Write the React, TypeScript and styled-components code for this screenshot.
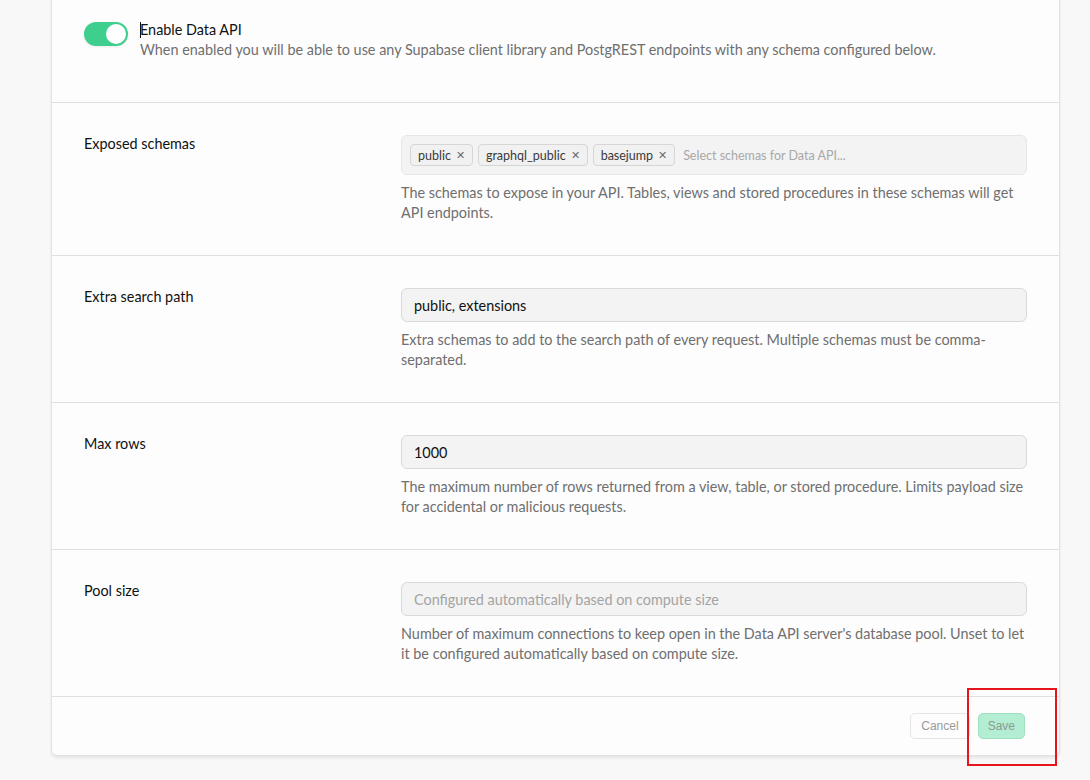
import React from 'react';
import styled, { createGlobalStyle } from 'styled-components';

const GlobalStyle = createGlobalStyle`
  html, body {
    margin: 0;
    padding: 0;
    background: #f8f8f8;
    font-family: Lato, "Liberation Sans", sans-serif;
    color: #1c1c1c;
  }
`;

const Page = styled.div`
  position: relative;
  width: 1090px;
  height: 780px;
  overflow: hidden;
`;

const Card = styled.div`
  margin: -11px 0 0 51px;
  width: 1007px;
  background: #fdfdfd;
  border: 1px solid #e2e2e2;
  border-radius: 0 0 6px 6px;
  box-shadow: 0 2px 3px rgba(0, 0, 0, 0.08);
`;

const ToggleSection = styled.div`
  display: flex;
  align-items: flex-start;
  gap: 12px;
  padding: 32px 32px 42px;
  border-bottom: 1px solid #e0e0e0;
`;

const Toggle = styled.div<{ $on?: boolean }>`
  flex: none;
  width: 44px;
  height: 24px;
  border-radius: 12px;
  background: ${(p) => (p.$on ? '#3ecf8e' : '#d6d6d6')};
  position: relative;
  box-shadow: 0 1px 3px rgba(0, 0, 0, 0.08);

  &::after {
    content: '';
    position: absolute;
    top: 2px;
    left: ${(p) => (p.$on ? '22px' : '2px')};
    width: 20px;
    height: 20px;
    border-radius: 50%;
    background: #fff;
  }
`;

const ToggleText = styled.div`
  display: flex;
  flex-direction: column;
  margin-top: -2px;
`;

const Title = styled.div`
  font-size: 14.4px;
  line-height: 20px;
  color: #111;
  position: relative;

  &::before {
    content: '';
    position: absolute;
    left: 0;
    top: 2px;
    height: 16px;
    border-left: 1px solid #111;
  }
`;

const Description = styled.div`
  font-size: 14.4px;
  line-height: 20px;
  color: #6f6f6f;
`;

const Row = styled.div`
  display: grid;
  grid-template-columns: 317px 1fr;
  padding: 32px;
  border-bottom: 1px solid #e0e0e0;
`;

const Label = styled.div`
  font-size: 14.4px;
  line-height: 20px;
  color: #111;
  margin-top: -1px;
`;

const Field = styled.div`
  display: flex;
  flex-direction: column;
  gap: 8px;
`;

const Input = styled.div<{ $placeholder?: boolean }>`
  height: 34px;
  box-sizing: border-box;
  border: 1px solid #dadada;
  border-radius: 6px;
  background: #f3f3f3;
  padding: 0 12px;
  display: flex;
  align-items: center;
  font-size: 14.4px;
  color: ${(p) => (p.$placeholder ? '#a3a3a3' : '#111')};
`;

const MultiSelect = styled.div`
  height: 40px;
  box-sizing: border-box;
  border: 1px solid #e6e6e6;
  border-radius: 6px;
  background: #f3f3f3;
  padding: 0 8px;
  display: flex;
  align-items: center;
  gap: 5px;
`;

const Tag = styled.span`
  display: inline-flex;
  align-items: center;
  gap: 5px;
  height: 22px;
  box-sizing: border-box;
  padding: 0 7px;
  border: 1px solid #d6d6d6;
  border-radius: 4px;
  background: #f1f1f1;
  font-size: 12.5px;
  color: #3a3a3a;
`;

const TagClose = styled.span`
  font-size: 11px;
  color: #6a6a6a;
`;

const SelectPlaceholder = styled.span`
  margin-left: 3px;
  font-size: 12.5px;
  color: #a8a8a8;
`;

const Footer = styled.div`
  display: flex;
  justify-content: flex-end;
  gap: 8px;
  padding: 16px 34px 16px 32px;
`;

const Button = styled.button<{ $primary?: boolean }>`
  height: 26px;
  padding: 0 ${(p) => (p.$primary ? '9px' : '10px')};
  border-radius: 5px;
  font-family: "Liberation Sans", Arial, sans-serif;
  font-size: 12px;
  border: 1px solid ${(p) => (p.$primary ? '#9fe0c0' : '#e6e6e6')};
  background: ${(p) => (p.$primary ? '#b4eed2' : '#fdfdfd')};
  color: ${(p) => (p.$primary ? '#8a9a92' : '#9a9a9a')};
`;

const Highlight = styled.div`
  position: absolute;
  left: 967px;
  top: 688px;
  width: 90px;
  height: 78px;
  border: 2px solid #e8141c;
  box-sizing: border-box;
  pointer-events: none;
`;

const rows = [
  {
    label: 'Extra search path',
    value: 'public, extensions',
    help: 'Extra schemas to add to the search path of every request. Multiple schemas must be comma-separated.',
  },
  {
    label: 'Max rows',
    value: '1000',
    help: 'The maximum number of rows returned from a view, table, or stored procedure. Limits payload size for accidental or malicious requests.',
  },
  {
    label: 'Pool size',
    value: 'Configured automatically based on compute size',
    placeholder: true,
    help: "Number of maximum connections to keep open in the Data API server's database pool. Unset to let it be configured automatically based on compute size.",
  },
];

export default function App() {
  return (
    <Page>
      <GlobalStyle />
      <Card>
        <ToggleSection>
          <Toggle $on />
          <ToggleText>
            <Title>Enable Data API</Title>
            <Description>
              When enabled you will be able to use any Supabase client library and PostgREST
              endpoints with any schema configured below.
            </Description>
          </ToggleText>
        </ToggleSection>

        <Row>
          <Label>Exposed schemas</Label>
          <Field>
            <MultiSelect>
              {['public', 'graphql_public', 'basejump'].map((s) => (
                <Tag key={s}>
                  {s}
                  <TagClose>✕</TagClose>
                </Tag>
              ))}
              <SelectPlaceholder>Select schemas for Data API...</SelectPlaceholder>
            </MultiSelect>
            <Description>
              The schemas to expose in your API. Tables, views and stored procedures in these
              schemas will get API endpoints.
            </Description>
          </Field>
        </Row>

        {rows.map((r) => (
          <Row key={r.label}>
            <Label>{r.label}</Label>
            <Field>
              <Input $placeholder={r.placeholder}>{r.value}</Input>
              <Description>{r.help}</Description>
            </Field>
          </Row>
        ))}

        <Footer>
          <Button>Cancel</Button>
          <Button $primary>Save</Button>
        </Footer>
      </Card>
      <Highlight />
    </Page>
  );
}
